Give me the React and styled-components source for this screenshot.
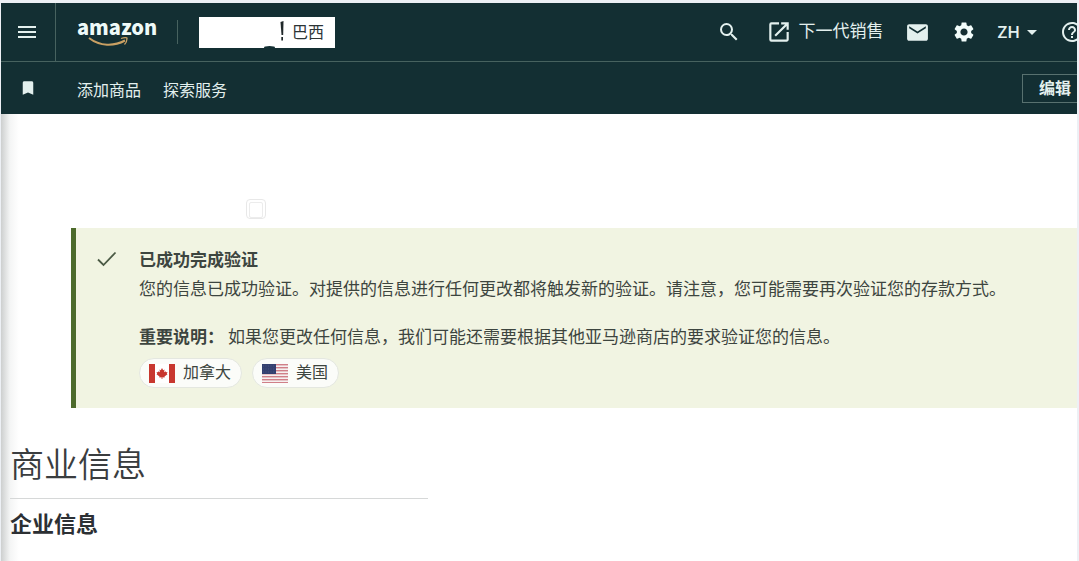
import React from "react";
import styled, { createGlobalStyle } from "styled-components";
import {
  MdArrowDropDown,
  MdBookmark,
  MdEmail,
  MdHelpOutline,
  MdMenu,
  MdOpenInNew,
  MdSearch,
  MdSettings,
} from "react-icons/md";

const GlobalStyle = createGlobalStyle`
  * {
    box-sizing: border-box;
  }

  body {
    margin: 0;
    background: #edf0f5;
    font-family: "Open Sans", "Noto Sans CJK SC", sans-serif;
    color: #3d453f;
  }

  button {
    font: inherit;
    cursor: pointer;
  }
`;

const Page = styled.div`
  display: flex;
  flex-direction: column;
  min-height: 100vh;
  padding: 3px 2px 0 1px;
`;

const Header = styled.header`
  overflow: hidden;
  background: #132f33;
  color: #e3f0ee;
`;

const Bar = styled.div`
  display: flex;
  align-items: center;
  height: ${(props) => props.$height};
  border-bottom: ${(props) => (props.$line ? "1px solid #47625f" : "none")};
`;

const IconButton = styled.button`
  display: flex;
  align-items: center;
  justify-content: center;
  padding: 0;
  border: 0;
  background: none;
  color: inherit;
`;

const SideCell = styled.div`
  display: flex;
  align-items: center;
  justify-content: center;
  flex: none;
  width: 55px;
  height: 100%;
  padding-right: 2px;
  border-right: ${(props) => (props.$line ? "1px solid #47625f" : "none")};
`;

const Logo = styled.a`
  display: flex;
  flex-direction: column;
  flex: none;
  width: 77px;
  margin-left: 21px;
  color: #eefaf8;
  font-family: "Noto Sans CJK SC", sans-serif;
  font-size: 20px;
  font-weight: 900;
  line-height: 20px;
  text-decoration: none;

  svg {
    margin-left: 11px;
  }
`;

const Separator = styled.span`
  width: 1px;
  height: 24px;
  margin: 0 21px 0 23px;
  background: #47625f;
`;

const StoreButton = styled.button`
  display: flex;
  position: relative;
  align-items: center;
  justify-content: flex-end;
  gap: 8px;
  width: 136px;
  height: 31px;
  padding: 0 11px 2px 0;
  border: 0;
  background: #fff;
  color: #2c3436;
  font-size: 16px;

  &::after {
    position: absolute;
    bottom: -1px;
    left: 65px;
    width: 11px;
    height: 3px;
    border-radius: 50% 50% 0 0;
    background: #132f33;
    content: "";
  }
`;

const Tools = styled.div`
  display: flex;
  align-items: center;
  margin: 0 -7px 0 auto;
`;

const NextGenLink = styled.a`
  display: flex;
  align-items: center;
  gap: 6px;
  margin: 0 22px 0 25px;
  color: inherit;
  font-size: 17px;
  line-height: 24px;
  text-decoration: none;

  span {
    padding-bottom: 2px;
  }
`;

const LanguageButton = styled(IconButton)`
  margin: 0 16px 0 21px;
  font-size: 17px;
  font-weight: 600;
  line-height: 24px;
`;

const SettingsButton = styled(IconButton)`
  margin-left: 22px;
  color: #f2fdfb;
`;

const Nav = styled.nav`
  display: flex;
  gap: 22px;
  margin-left: 21px;
  padding-top: 4px;
`;

const NavLink = styled.a`
  color: inherit;
  font-size: 16px;
  line-height: 24px;
  text-decoration: none;
`;

const EditButton = styled.button`
  height: 29px;
  margin: 0 -12px 0 auto;
  padding: 0 17px 0 16px;
  border: 1px solid #58716f;
  background: none;
  color: inherit;
  font-size: 16px;
  font-weight: 600;
  line-height: 24px;
`;

const Main = styled.main`
  flex: 1;
  padding-top: 85px;
  background: linear-gradient(to right, #cdcfcf, #f4f5f5 9px, #fff 18px);
`;

const Placeholder = styled.div`
  width: 20px;
  height: 20px;
  margin: 0 0 9px 245px;
  border: 1px solid #e8e8e8;
  border-radius: 4px;
  padding: 2px;

  &::after {
    display: block;
    height: 100%;
    border: 1px solid #ececec;
    border-radius: 2px;
    content: "";
  }
`;

const Alert = styled.section`
  display: flex;
  align-items: flex-start;
  gap: 22px;
  margin-left: 70px;
  padding: 17px 20px 20px 21px;
  border-left: 5px solid #4d6b2c;
  background: #f1f4e2;

  > svg {
    flex: none;
    margin-top: 6px;
  }
`;

const AlertTitle = styled.h2`
  margin: 0;
  font-size: 17px;
  font-weight: 600;
  line-height: 29px;
`;

const AlertText = styled.p`
  margin: 0 0 ${(props) => props.$gap};
  font-size: 17px;
  line-height: 29px;

  strong {
    margin-right: 4px;
    font-weight: 600;
  }
`;

const Chips = styled.div`
  display: flex;
  gap: 10px;
`;

const Chip = styled.span`
  display: flex;
  align-items: center;
  gap: 8px;
  height: 30px;
  padding: 0 10px 0 9px;
  border: 1px solid #e4e7e0;
  border-radius: 15px;
  background: #fbfcf9;
  font-size: 16px;
  line-height: 24px;

  span {
    padding-bottom: 2px;
  }
`;

const Title = styled.h1`
  width: 418px;
  max-width: 100%;
  margin: 31px 0 0 9px;
  padding-bottom: 11px;
  border-bottom: 1px solid #d6d8d8;
  color: #3a3d3f;
  font-family: "Noto Sans CJK SC", sans-serif;
  font-size: 34px;
  font-weight: 350;
  line-height: 48px;
`;

const Subtitle = styled.h2`
  margin: 8px 0 0 9px;
  color: #2c3034;
  font-size: 22px;
  font-weight: 600;
  line-height: 32px;
`;

const Smile = () => (
  <svg width="42" height="10" viewBox="0 0 42 10" fill="none">
    <path d="M1 1C12 9.500 26 9.500 37 3.500" stroke="#c9a063" strokeWidth="2" />
    <path d="M33 1.500C36 .5 39.500 .3 39 1.500C39 3.500 38 6 36.500 7.500" stroke="#c9a063" strokeWidth="1.300" />
  </svg>
);

const Stroke = () => (
  <svg width="4" height="20" viewBox="0 0 4 20" fill="#20282a">
    <path d="M.5 1L3.500 0L3.200 14L1.500 14Z" />
    <path d="M1.300 16H3V19.500H1.300Z" />
  </svg>
);

const CheckMark = () => (
  <svg width="20" height="16" viewBox="0 0 20 16" fill="none">
    <path d="M1 8.500L6.500 14L18.500 1.500" stroke="#4b5a45" strokeWidth="1.800" />
  </svg>
);

const CanadaFlag = () => (
  <svg width="26" height="19" viewBox="0 0 26 19">
    <path fill="#fff" d="M0 0h26v19H0z" />
    <path fill="#c8372f" d="M0 0h6v19H0zM20 0h6v19h-6z" />
    <path
      fill="#c8372f"
      d="M13 4l1.200 2.200 1.300-.6-.4 2.600 1.500-1 .4 1 1.500-.2-.7 1.700.7.600-3 2.200.2 1-2.300-.3V15h-.8v-1.800l-2.300.3.2-1-3-2.200.7-.6-.7-1.700 1.500.2.4-1 1.500 1-.4-2.600 1.300.6z"
    />
  </svg>
);

const UsaFlag = () => (
  <svg width="26" height="19" viewBox="0 0 26 19">
    <path fill="#f6f0f0" d="M0 0h26v19H0z" />
    {[0, 3, 6, 9, 12, 15, 18].map((y) => (
      <path key={y} fill="#d07f88" d={`M0 ${y}h26v1.400H0z`} />
    ))}
    <path fill="#34406f" d="M0 0h14v10H0z" />
    {[2, 5, 8].map((y) => (
      <path key={y} stroke="#535d88" strokeWidth=".7" strokeDasharray="1 1.500" d={`M1 ${y}h12`} />
    ))}
  </svg>
);

const App = () => (
  <Page>
    <GlobalStyle />
    <Header>
      <Bar $height="59px" $line>
        <SideCell $line>
          <IconButton aria-label="菜单">
            <MdMenu size={24} />
          </IconButton>
        </SideCell>
        <Logo href="#">
          amazon
          <Smile />
        </Logo>
        <Separator />
        <StoreButton>
          <Stroke />
          巴西
        </StoreButton>
        <Tools>
          <IconButton aria-label="搜索">
            <MdSearch size={24} />
          </IconButton>
          <NextGenLink href="#">
            <MdOpenInNew size={26} />
            <span>下一代销售</span>
          </NextGenLink>
          <IconButton aria-label="邮件">
            <MdEmail size={25} />
          </IconButton>
          <SettingsButton aria-label="设置">
            <MdSettings size={24} />
          </SettingsButton>
          <LanguageButton>
            <span>ZH</span>
            <MdArrowDropDown size={24} />
          </LanguageButton>
          <IconButton aria-label="帮助">
            <MdHelpOutline size={24} />
          </IconButton>
        </Tools>
      </Bar>
      <Bar $height="52px">
        <SideCell>
          <IconButton aria-label="书签">
            <MdBookmark size={18} />
          </IconButton>
        </SideCell>
        <Nav>
          <NavLink href="#">添加商品</NavLink>
          <NavLink href="#">探索服务</NavLink>
        </Nav>
        <EditButton>编辑</EditButton>
      </Bar>
    </Header>
    <Main>
      <Placeholder />
      <Alert>
        <CheckMark />
        <div>
          <AlertTitle>已成功完成验证</AlertTitle>
          <AlertText $gap="19px">
            您的信息已成功验证。对提供的信息进行任何更改都将触发新的验证。请注意，您可能需要再次验证您的存款方式。
          </AlertText>
          <AlertText $gap="7px">
            <strong>重要说明：</strong>
            如果您更改任何信息，我们可能还需要根据其他亚马逊商店的要求验证您的信息。
          </AlertText>
          <Chips>
            <Chip>
              <CanadaFlag />
              <span>加拿大</span>
            </Chip>
            <Chip>
              <UsaFlag />
              <span>美国</span>
            </Chip>
          </Chips>
        </div>
      </Alert>
      <Title>商业信息</Title>
      <Subtitle>企业信息</Subtitle>
    </Main>
  </Page>
);

export default App;
